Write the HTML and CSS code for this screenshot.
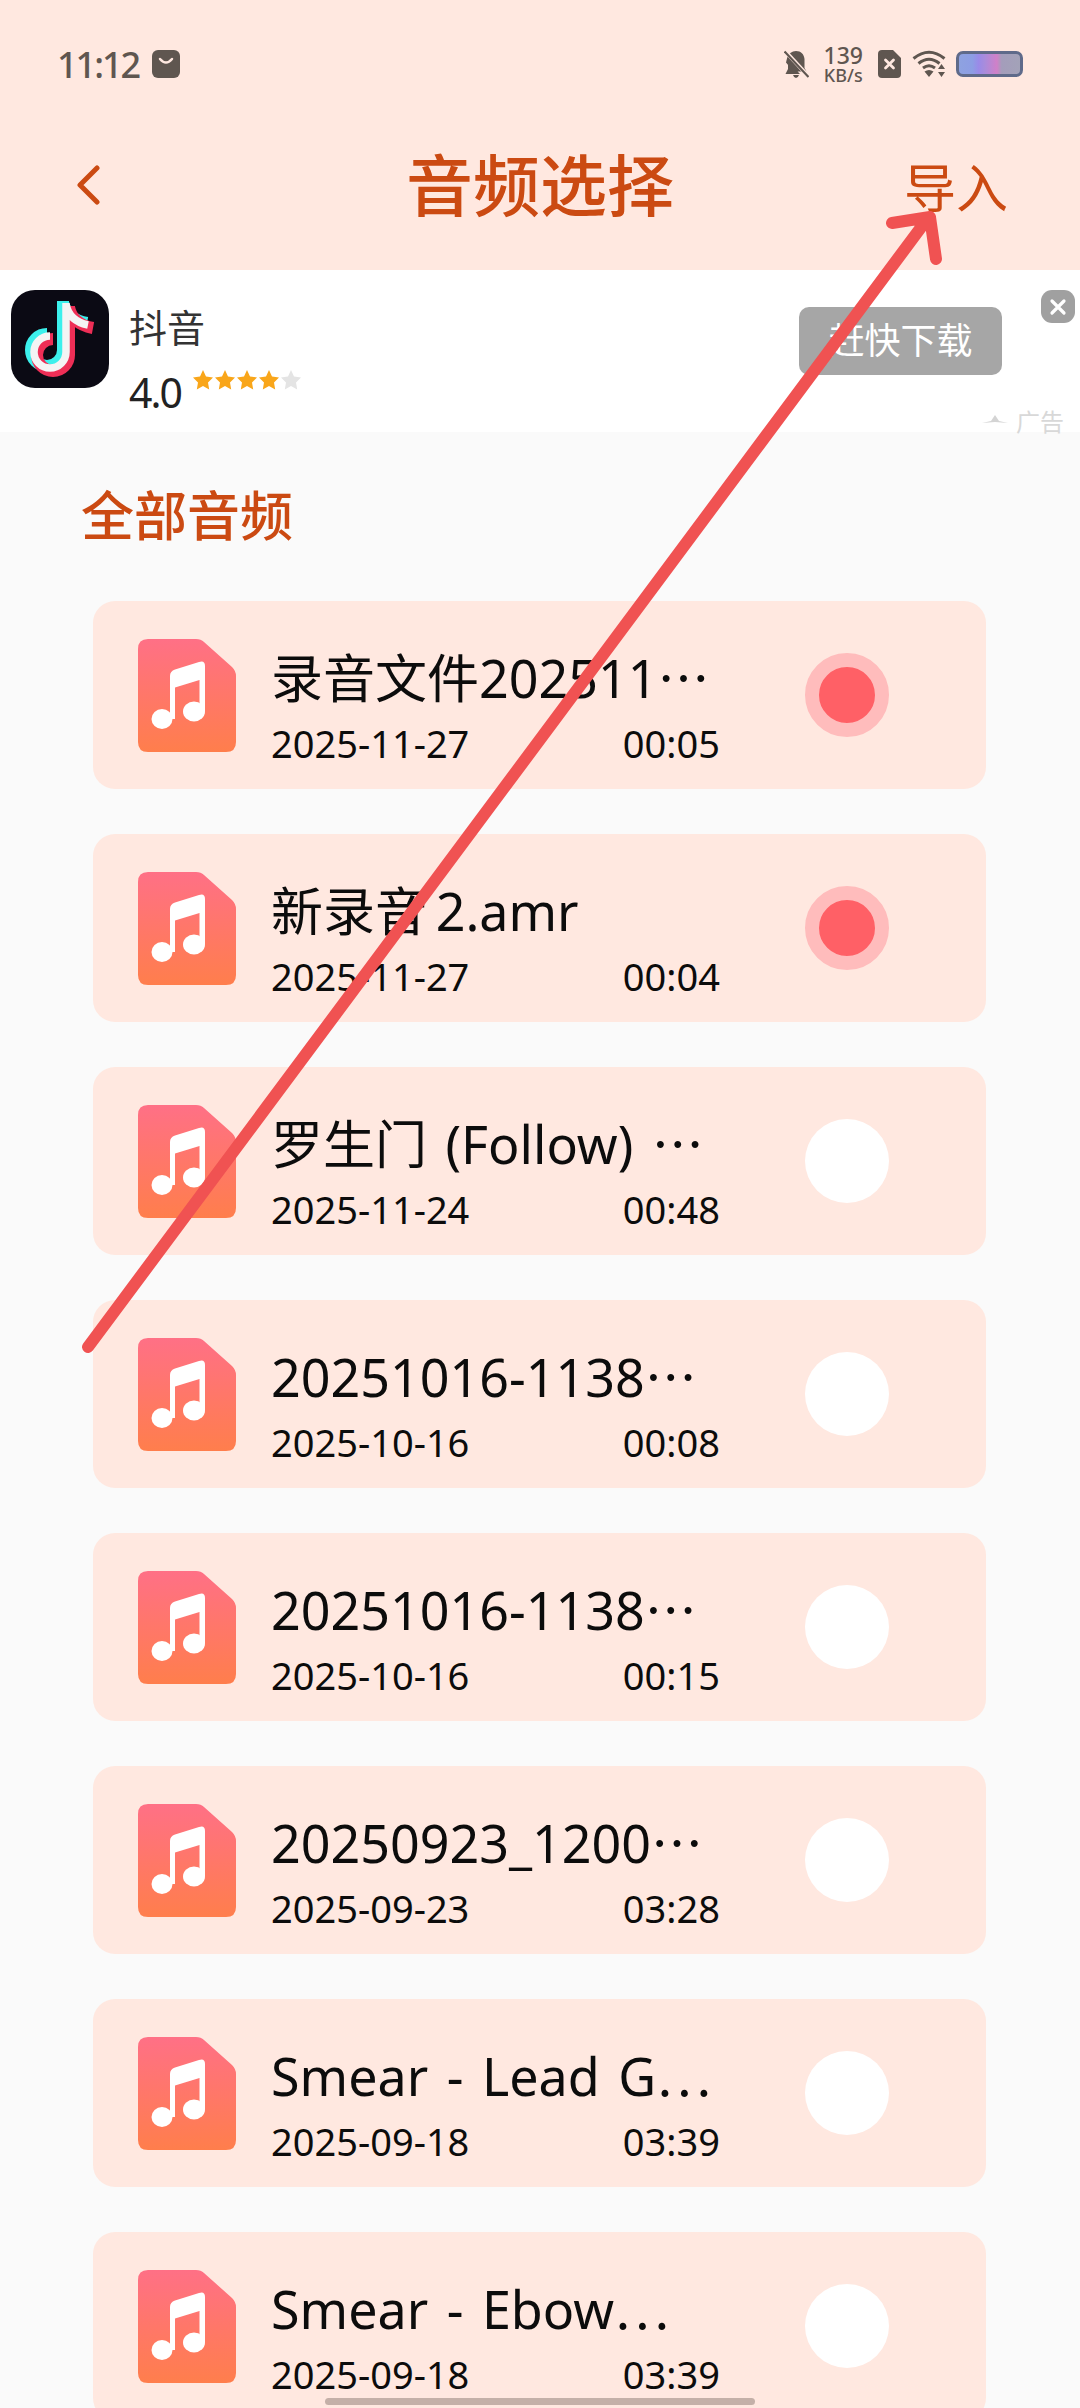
FILE: index.html
```html
<!DOCTYPE html>
<html>
<head>
	<title>音频选择</title>
	<meta charset=utf-8>
	<meta name=viewport content="width=device-width, initial-scale=1">
	<link rel="stylesheet" href="styles.css">
</head>
<body>
	<svg class="defs" width="0" height="0">
		<defs>
			<linearGradient id="filegrad" x1="0" y1="0" x2="0" y2="1">
				<stop offset="0" stop-color="#ff7086"/>
				<stop offset="1" stop-color="#ff7e4c"/>
			</linearGradient>
			<symbol id="audiofile" viewBox="0 0 98 113">
				<path fill="url(#filegrad)" d="M10 0H58q5 0 8 3L94 28q4 4 4 9V103q0 10-10 10H10Q0 113 0 103V10Q0 0 10 0z"/>
				<path fill="#fff" d="M32 80V37q0-5 5-6.500L61 23q6-2 6 4V72H61.500V41L37 48.500V80z"/>
				<ellipse fill="#fff" cx="24" cy="80" rx="10.500" ry="10"/>
				<ellipse fill="#fff" cx="56" cy="72.500" rx="11" ry="10"/>
			</symbol>
		</defs>
	</svg>

	<div class="header">
		<div class="status">
			<div class="status-left">
				<span class="clock">11:12</span>
				<svg width="28" height="28" viewBox="0 0 28 28"><rect width="28" height="28" rx="6" fill="#5f5650"/><path d="M8 9q6 7 12 0" fill="none" stroke="#ffe8e0" stroke-width="2.500" stroke-linecap="round"/></svg>
			</div>
			<div class="status-right">
				<svg class="st-bell" width="25" height="28" viewBox="0 0 25 28"><path fill="#5f5650" d="M12 1c5 0 8 3 8.500 8v9l2 3.500-13 0-7.500-9 1-4C4 4 8 1 12 1zM2 9.500 16 24H1.500L4 19v-7zM9 25h6q-1 3-3 3t-3-3z"/><path d="M1 1 25 27" stroke="#ffe8e0" stroke-width="4"/><path d="M.5 1.500 24.500 27" stroke="#5f5650" stroke-width="2.200"/></svg>
				<div class="speed"><span class="speed-num">139</span><span class="speed-unit">KB/s</span></div>
				<svg class="st-sim" width="23" height="28" viewBox="0 0 23 28"><path fill="#5f5650" d="M4 0H15l8 8V24q0 4-4 4H4q-4 0-4-4V4q0-4 4-4z"/><path d="M7.500 10 15.500 18M15.500 10 7.500 18" stroke="#ffe8e0" stroke-width="2.800" stroke-linecap="round"/></svg>
				<svg class="st-wifi" width="34" height="28" viewBox="0 0 34 28"><path d="M1.500 8.500Q17-4 32.500 8.500M6.500 13.500Q17 5 27.500 13.500M11 18q6-4.500 12 0" fill="none" stroke="#5f5650" stroke-width="3"/><path fill="#5f5650" d="M12.500 21.500q4.500-3 9 0L17 27zM26 19l3.500-5 3.500 5zM26 22h7l-3.500 5z"/></svg>
				<div class="battery"></div>
			</div>
		</div>
		<div class="nav">
			<svg class="back" width="23" height="40" viewBox="0 0 23 40"><path d="M20 3 3 20 20 37" fill="none" stroke="#cb4a12" stroke-width="5" stroke-linecap="round" stroke-linejoin="round"/></svg>
			<div class="nav-title">音频选择</div>
			<div class="nav-action">导入</div>
		</div>
	</div>

	<div class="ad">
		<svg class="ad-icon" width="98" height="98" viewBox="0 0 98 98">
			<rect width="98" height="98" rx="24" fill="#0b0a14"/>
			<g fill="none" stroke-width="12">
				<path stroke="#3cf0ec" transform="translate(-3 -2)" d="M55 13V62a16 16 0 1 1-16-16M55 14q3 17 24 21"/>
				<path stroke="#ee2e56" transform="translate(3 3)" d="M55 13V62a16 16 0 1 1-16-16M55 14q3 17 24 21"/>
				<path stroke="#f4f4f4" stroke-width="7.500" d="M55 13V62a16 16 0 1 1-16-16M55 14q3 17 22 21"/>
			</g>
		</svg>
		<div class="ad-info">
			<div class="ad-name">抖音</div>
			<div class="ad-rating">
				<span class="ad-score">4.0</span>
				<svg class="ad-stars" width="108" height="20" viewBox="0 0 108 20">
					<g fill="#f9a61a">
						<polygon id="star" points="10,0 13,6.500 20,7.500 15,12.500 16.200,19.500 10,16 3.800,19.500 5,12.500 0,7.500 7,6.500"/>
						<use href="#star" x="22"/>
						<use href="#star" x="44"/>
						<use href="#star" x="66"/>
					</g>
					<use href="#star" x="88" style="fill:#e4e4e4"/>
				</svg>
			</div>
		</div>
		<div class="ad-btn">赶快下载</div>
		<div class="ad-close">
			<svg width="20" height="20" viewBox="0 0 20 20"><path d="M4 4 16 16M16 4 4 16" stroke="#fff" stroke-width="3.200" stroke-linecap="round"/></svg>
		</div>
		<div class="ad-tag">
			<svg width="26" height="10" viewBox="0 0 26 10"><path d="M0 9 9 7 13 1 17 7 26 9 13 8z" fill="#d4d4d4"/></svg>
			<span>广告</span>
		</div>
	</div>

	<div class="section-title">全部音频</div>

	<div class="list">
		<div class="row">
			<svg class="file" width="98" height="113"><use href="#audiofile"/></svg>
			<div class="row-body">
				<div class="row-name">录音文件202511⋯</div>
				<div class="row-meta"><span>2025-11-27</span><span>00:05</span></div>
			</div>
			<div class="radio on"></div>
		</div>
		<div class="row">
			<svg class="file" width="98" height="113"><use href="#audiofile"/></svg>
			<div class="row-body">
				<div class="row-name">新录音&#8201;2.amr</div>
				<div class="row-meta"><span>2025-11-27</span><span>00:04</span></div>
			</div>
			<div class="radio on"></div>
		</div>
		<div class="row">
			<svg class="file" width="98" height="113"><use href="#audiofile"/></svg>
			<div class="row-body">
				<div class="row-name">罗生门 (Follow) ⋯</div>
				<div class="row-meta"><span>2025-11-24</span><span>00:48</span></div>
			</div>
			<div class="radio"></div>
		</div>
		<div class="row">
			<svg class="file" width="98" height="113"><use href="#audiofile"/></svg>
			<div class="row-body">
				<div class="row-name">20251016-1138⋯</div>
				<div class="row-meta"><span>2025-10-16</span><span>00:08</span></div>
			</div>
			<div class="radio"></div>
		</div>
		<div class="row">
			<svg class="file" width="98" height="113"><use href="#audiofile"/></svg>
			<div class="row-body">
				<div class="row-name">20251016-1138⋯</div>
				<div class="row-meta"><span>2025-10-16</span><span>00:15</span></div>
			</div>
			<div class="radio"></div>
		</div>
		<div class="row">
			<svg class="file" width="98" height="113"><use href="#audiofile"/></svg>
			<div class="row-body">
				<div class="row-name">20250923_1200⋯</div>
				<div class="row-meta"><span>2025-09-23</span><span>03:28</span></div>
			</div>
			<div class="radio"></div>
		</div>
		<div class="row">
			<svg class="file" width="98" height="113"><use href="#audiofile"/></svg>
			<div class="row-body">
				<div class="row-name">Smear - Lead G⋯</div>
				<div class="row-meta"><span>2025-09-18</span><span>03:39</span></div>
			</div>
			<div class="radio"></div>
		</div>
		<div class="row">
			<svg class="file" width="98" height="113"><use href="#audiofile"/></svg>
			<div class="row-body">
				<div class="row-name">Smear - Ebow⋯</div>
				<div class="row-meta"><span>2025-09-18</span><span>03:39</span></div>
			</div>
			<div class="radio"></div>
		</div>
	</div>

	<!-- hand drawn arrow on top of the screenshot -->
	<svg class="scribble" width="1080" height="2408" viewBox="0 0 1080 2408">
		<path d="M88 1347 928 218M892 223 930 217 936 259" fill="none" stroke="#f05252" stroke-width="12" stroke-linecap="round" stroke-linejoin="round"/>
	</svg>
	<div class="homebar"></div>
</body>
</html>
```

FILE: styles.css
```css
html, body {
	margin: 0;
	height: 2408px;
	overflow: hidden;
}
body {
	position: relative;
	background: #fafafa;
	font-family: "Noto Sans", "Noto Sans CJK SC", sans-serif;
	color: #0c0c0c;
}
.defs {
	position: absolute;
}

/* header */
.header {
	height: 270px;
	background: #ffe8e0;
}
.status {
	height: 128px;
	padding: 0 57px;
	display: flex;
	align-items: center;
	justify-content: space-between;
	color: #5f5650;
}
.status-left {
	display: flex;
	align-items: center;
	gap: 13px;
}
.clock {
	font-size: 36px;
	font-weight: 500;
	letter-spacing: -2px;
}
.status-right {
	display: flex;
	align-items: center;
	gap: 15px;
}
.speed {
	display: flex;
	flex-direction: column;
	align-items: center;
	font-weight: 500;
}
.speed-num {
	font-size: 23px;
	line-height: 21px;
}
.speed-unit {
	font-size: 18px;
	line-height: 18px;
}
.st-wifi {
	margin-left: -4px;
}
.battery {
	width: 67px;
	height: 26px;
	margin-left: -5px;
	box-sizing: border-box;
	border: 3px solid #5f6a8a;
	border-radius: 7px;
	background: linear-gradient(90deg, #8ea2e0 0%, #8d9de4 22%, #9a8ae8 32%, #a88cdc 42%, #d080c8 62%, #a49dbb 70%, #a3a2b8 100%);
}
.nav {
	height: 114px;
	padding: 0 72px;
	display: grid;
	grid-template-columns: 1fr auto 1fr;
	align-items: center;
	color: #cb4a12;
}
.back {
	margin-left: 5px;
}
.nav-title {
	font-size: 67px;
	font-weight: 500;
	margin-top: -6px;
}
.nav-action {
	font-size: 52px;
	text-align: right;
}

/* ad */
.ad {
	position: relative;
	height: 162px;
	padding: 20px 0 0 11px;
	box-sizing: border-box;
	background: #fff;
	display: flex;
	align-items: flex-start;
}
.ad-icon {
	flex: none;
}
.ad-info {
	margin: 0 0 0 20px;
	padding-top: 14px;
}
.ad-name {
	font-size: 38px;
	line-height: 46px;
	color: #333;
}
.ad-rating {
	display: flex;
	align-items: flex-start;
	margin-top: 17px;
}
.ad-score {
	font-size: 41px;
	letter-spacing: -2px;
	line-height: 50px;
	color: #222;
}
.ad-stars {
	margin: 3px 0 0 12px;
}
.ad-btn {
	width: 203px;
	height: 68px;
	margin: 17px 78px 0 auto;
	border-radius: 10px;
	background: #a6a6a6;
	color: #fff;
	font-size: 36px;
	line-height: 68px;
	text-align: center;
}
.ad-close {
	position: absolute;
	top: 20px;
	right: 5px;
	width: 34px;
	height: 33px;
	border-radius: 11px;
	background: #a0a0a0;
	display: flex;
	align-items: center;
	justify-content: center;
}
.ad-tag {
	position: absolute;
	right: 16px;
	bottom: -4px;
	height: 28px;
	display: flex;
	align-items: flex-start;
	gap: 8px;
	color: #d8d8d8;
	font-size: 24px;
	line-height: 28px;
}
.ad-tag svg {
	margin-top: 6px;
}

/* list */
.section-title {
	height: 169px;
	padding-left: 81px;
	box-sizing: border-box;
	font-size: 53px;
	font-weight: 500;
	line-height: 168px;
	color: #cb4a12;
}
.list {
	margin-left: 93px;
	width: 893px;
	display: flex;
	flex-direction: column;
	gap: 45px;
}
.row {
	flex: none;
	height: 188px;
	padding-left: 45px;
	box-sizing: border-box;
	border-radius: 22px;
	background: #ffe8e0;
	display: flex;
	align-items: center;
}
.file {
	flex: none;
}
.row-body {
	width: 449px;
	margin: 20px 0 0 35px;
}
.row-name {
	font-size: 52px;
	line-height: 76px;
	word-spacing: 5px;
	white-space: nowrap;
}
.row-meta {
	display: flex;
	justify-content: space-between;
	font-size: 38px;
	line-height: 54px;
}
.radio {
	flex: none;
	width: 84px;
	height: 84px;
	margin-left: 85px;
	border-radius: 50%;
	background: #fff;
	box-sizing: border-box;
}
.radio.on {
	background: #ff6066;
	border: 14px solid #ffbcbc;
}

/* overlays */
.scribble {
	position: absolute;
	top: 0;
	left: 0;
}
.homebar {
	position: absolute;
	left: 325px;
	bottom: 3px;
	width: 430px;
	height: 7px;
	border-radius: 4px;
	background: #c4b0a8;
}
```
